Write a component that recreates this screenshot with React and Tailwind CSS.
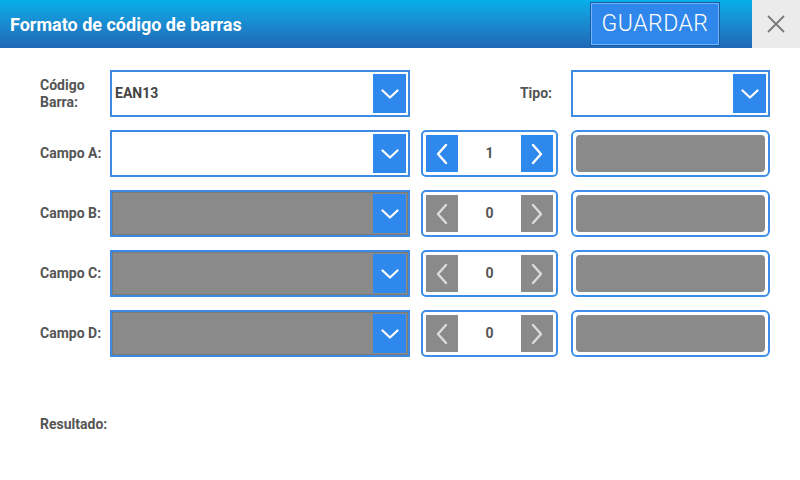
import React from 'react';

const rows = [
  { label: 'Campo A:', enabled: true, value: 1 },
  { label: 'Campo B:', enabled: false, value: 0 },
  { label: 'Campo C:', enabled: false, value: 0 },
  { label: 'Campo D:', enabled: false, value: 0 },
];

function ChevronDown() {
  return (
    <svg width="18" height="10" viewBox="0 0 18 10" fill="none">
      <path d="M1.5 1.5 L9 8.5 L16.5 1.5" stroke="white" strokeWidth="2.2" strokeLinecap="round" strokeLinejoin="round" />
    </svg>
  );
}

function ChevronSide({ dir, color }) {
  return (
    <svg width="12" height="22" viewBox="0 0 12 22" fill="none">
      <path
        d={dir === 'left' ? 'M10 2 L2 11 L10 20' : 'M2 2 L10 11 L2 20'}
        stroke={color}
        strokeWidth="2.4"
        strokeLinecap="round"
        strokeLinejoin="round"
      />
    </svg>
  );
}

function Select({ value, disabled, width = 'w-[300px]' }) {
  return (
    <div className={`${width} h-full border-2 border-[#3d8ae3] ${disabled ? 'bg-[#8a8a8a]' : 'bg-white'}`}>
      <div className={`h-full flex items-stretch ${disabled ? 'border border-[#7a7a7a] p-px' : 'p-[2px]'}`}>
        <div className="flex-1 flex items-center pl-px text-[14px] font-bold text-[#444]">{value}</div>
        <div className="w-[33px] bg-[#2f88ec] flex items-center justify-center">
          <ChevronDown />
        </div>
      </div>
    </div>
  );
}

function Stepper({ value, enabled }) {
  const btn = enabled ? 'bg-[#2f88ec]' : 'bg-[#8a8a8a]';
  const icon = enabled ? '#ffffff' : '#dcdcdc';
  return (
    <div className="w-[137px] h-full rounded-[5px] border-2 border-[#3d8ee8] bg-white p-[3px] flex">
      <div className={`w-[32px] ${btn} flex items-center justify-center`}>
        <ChevronSide dir="left" color={icon} />
      </div>
      <div className="flex-1 flex items-center justify-center text-[14px] font-bold text-[#555]">{value}</div>
      <div className={`w-[32px] ${btn} flex items-center justify-center`}>
        <ChevronSide dir="right" color={icon} />
      </div>
    </div>
  );
}

function GrayBox() {
  return (
    <div className="w-[199px] h-full rounded-[6px] border-2 border-[#3d8ee8] bg-white p-[3px]">
      <div className="h-full rounded-[4px] bg-[#8a8a8a]" />
    </div>
  );
}

export default function App() {
  return (
    <div className="w-[800px] h-[480px] bg-white overflow-hidden" style={{ fontFamily: 'Roboto, "Liberation Sans", sans-serif' }}>
      {/* Header */}
      <div className="h-12 flex bg-gradient-to-b from-[#05aeea] to-[#2067b5]">
        <div className="flex-1 flex items-center pl-[10px] text-white text-[18px] font-bold">
          Formato de código de barras
        </div>
        <div className="flex items-center pr-[32px]">
          <button className="w-[130px] h-[44px] border border-[#1b5aa0] bg-[#2f87ec] shadow-[inset_0_0_0_1px_#6fb6ff] text-white text-[23px] font-light tracking-[0.5px]">
            GUARDAR
          </button>
        </div>
        <div className="w-12 bg-[#ebebeb] flex items-center justify-center">
          <svg width="18" height="18" viewBox="0 0 18 18" fill="none">
            <path d="M1 1 L17 17 M17 1 L1 17" stroke="#7a7a7a" strokeWidth="1.8" />
          </svg>
        </div>
      </div>

      {/* Form */}
      <div className="pl-10 pt-[22px] flex flex-col gap-[13px]">
        <div className="h-[47px] flex items-center">
          <div className="w-[70px] text-[14px] font-bold text-[#555] leading-[17px]">
            Código<br />Barra:
          </div>
          <Select value="EAN13" />
          <div className="w-[137px] ml-[11px] text-right pr-[6px] text-[14px] font-bold text-[#555]">Tipo:</div>
          <div className="ml-[13px] h-full">
            <Select value="" width="w-[199px]" />
          </div>
        </div>

        {rows.map((r) => (
          <div key={r.label} className="h-[47px] flex items-center">
            <div className="w-[70px] text-[14px] font-bold text-[#555]">{r.label}</div>
            <Select value="" disabled={!r.enabled} />
            <div className="ml-[11px] h-full">
              <Stepper value={r.value} enabled={r.enabled} />
            </div>
            <div className="ml-[13px] h-full">
              <GrayBox />
            </div>
          </div>
        ))}

        <div className="mt-[44px] text-[14px] font-bold text-[#555]">Resultado:</div>
      </div>
    </div>
  );
}
